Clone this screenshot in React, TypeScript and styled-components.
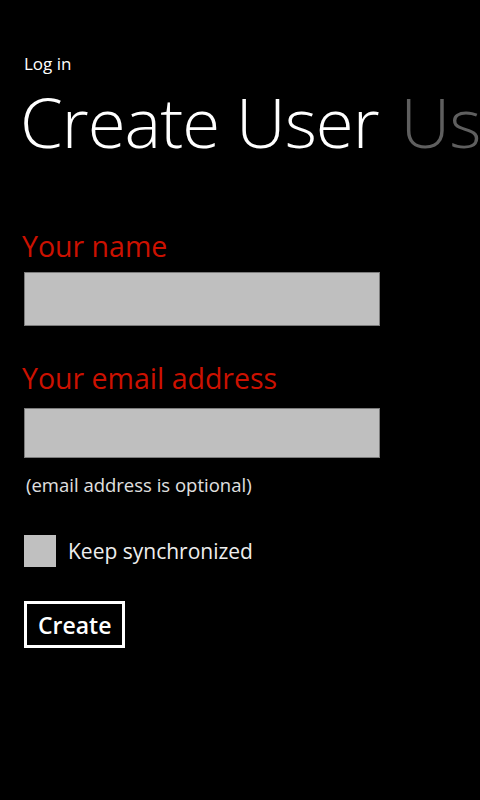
import React from 'react';
import styled, { createGlobalStyle } from 'styled-components';

const GlobalStyle = createGlobalStyle`
  html, body {
    margin: 0;
    padding: 0;
    background: #000;
  }
  body {
    font-family: 'Open Sans', 'Noto Sans', sans-serif;
    color: #fff;
  }
`;

const Page = styled.div`
  width: 480px;
  height: 800px;
  overflow: hidden;
  background: #000;
  padding-top: 52px;
  box-sizing: border-box;
`;

const AppTitle = styled.div`
  padding-left: 24px;
  font-size: 17px;
  line-height: 24px;
  color: #fff;
`;

const PivotHeader = styled.div`
  display: flex;
  gap: 22px;
  padding-left: 20px;
  margin-top: 5px;
  white-space: nowrap;
  overflow: hidden;
  font-size: 69px;
  font-weight: 300;
  line-height: 80px;
  letter-spacing: -1px;
`;

const PivotItem = styled.span<{ $active?: boolean }>`
  color: ${(p) => (p.$active ? '#fff' : '#5f5f5f')};
`;

const Form = styled.div`
  display: flex;
  flex-direction: column;
  padding: 0 24px;
  margin-top: 67px;
`;

const Field = styled.div<{ $last?: boolean }>`
  display: flex;
  flex-direction: column;
  margin-bottom: ${(p) => (p.$last ? 0 : 34)}px;
`;

const FieldLabel = styled.div<{ $gap: number }>`
  font-size: 28.5px;
  line-height: 36px;
  color: #cc1100;
  margin-left: -2px;
  margin-bottom: ${(p) => p.$gap}px;
`;

const TextBox = styled.div<{ $h: number }>`
  width: 356px;
  height: ${(p) => p.$h}px;
  box-sizing: border-box;
  background: #bfbfbf;
  border: 1px solid #7c7c7c;
`;

const Hint = styled.div`
  font-size: 18.5px;
  line-height: 24px;
  color: #e0e0e0;
  margin-top: 15px;
  margin-left: 2px;
`;

const CheckRow = styled.label`
  display: flex;
  align-items: center;
  gap: 12px;
  margin-top: 38px;
  font-size: 21px;
  color: #eee;
`;

const CheckBox = styled.span`
  width: 32px;
  height: 32px;
  background: #c0c0c0;
  display: inline-block;
`;

const Button = styled.button`
  align-self: flex-start;
  margin-top: 34px;
  height: 47px;
  padding: 0 11px;
  background: transparent;
  border: 3px solid #fff;
  color: #fff;
  font-family: 'Open Sans', 'Noto Sans', sans-serif;
  font-size: 23px;
  font-weight: 600;
`;

export default function App() {
  return (
    <Page>
      <GlobalStyle />
      <AppTitle>Log in</AppTitle>
      <PivotHeader>
        <PivotItem $active>Create User</PivotItem>
        <PivotItem>Users</PivotItem>
      </PivotHeader>
      <Form>
        <Field>
          <FieldLabel $gap={8}>Your name</FieldLabel>
          <TextBox $h={54} />
        </Field>
        <Field $last>
          <FieldLabel $gap={12}>Your email address</FieldLabel>
          <TextBox $h={50} />
          <Hint>(email address is optional)</Hint>
        </Field>
        <CheckRow>
          <CheckBox />
          Keep synchronized
        </CheckRow>
        <Button>Create</Button>
      </Form>
    </Page>
  );
}
